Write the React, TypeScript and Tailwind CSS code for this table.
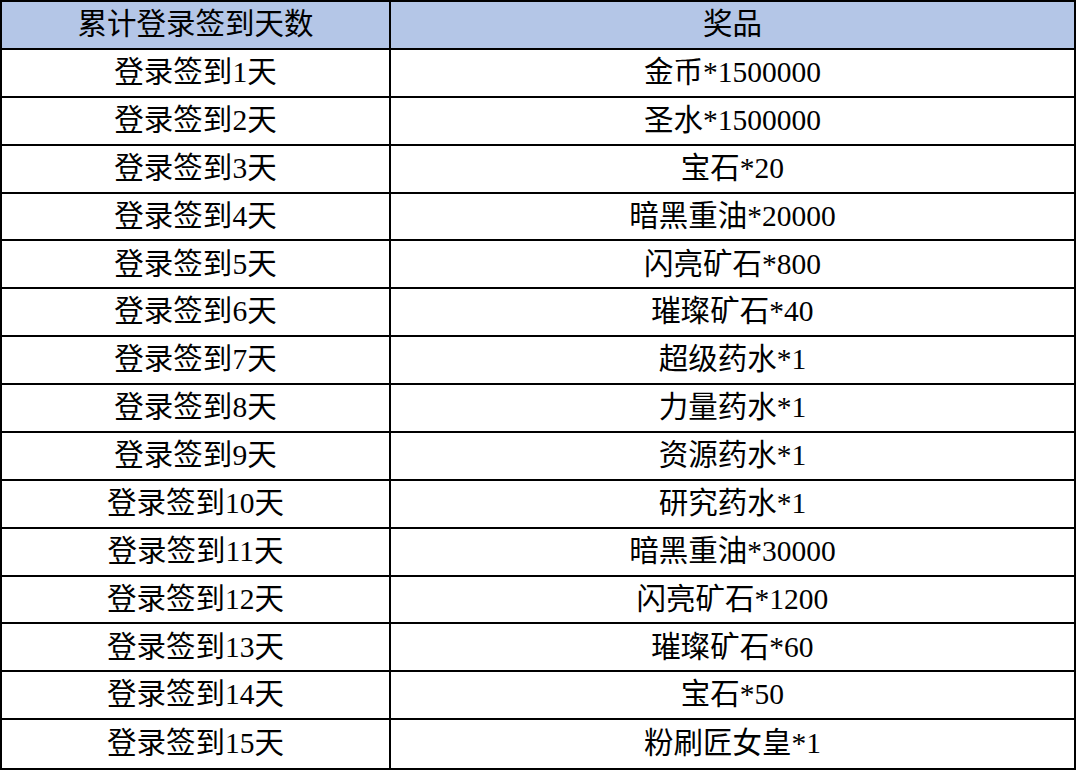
const rewards = [
  '金币*1500000',
  '圣水*1500000',
  '宝石*20',
  '暗黑重油*20000',
  '闪亮矿石*800',
  '璀璨矿石*40',
  '超级药水*1',
  '力量药水*1',
  '资源药水*1',
  '研究药水*1',
  '暗黑重油*30000',
  '闪亮矿石*1200',
  '璀璨矿石*60',
  '宝石*50',
  '粉刷匠女皇*1',
]

export default function App() {
  return (
    <div
      className="w-[1076px] h-[770px] bg-white text-black text-[29.5px] leading-none"
      style={{ fontFamily: '"Liberation Serif", "Noto Sans CJK SC", serif' }}
    >
      <div className="grid h-full grid-cols-[389px_1fr] grid-rows-[repeat(16,minmax(0,1fr))] border-2 border-black">
        {/* Header */}
        <div className="flex items-center justify-center border-r-2 border-b-2 border-black bg-[#b4c6e7]">
          累计登录签到天数
        </div>
        <div className="flex items-center justify-center border-b-2 border-black bg-[#b4c6e7]">
          奖品
        </div>

        {/* Rows */}
        {rewards.map((reward, i) => {
          const last = i === rewards.length - 1
          return [
            <div
              key={`d${i}`}
              className={`flex items-center justify-center border-r-2 border-black ${last ? '' : 'border-b-2'}`}
            >
              登录签到{i + 1}天
            </div>,
            <div
              key={`r${i}`}
              className={`flex items-center justify-center border-black ${last ? '' : 'border-b-2'}`}
            >
              {reward}
            </div>,
          ]
        })}
      </div>
    </div>
  )
}
